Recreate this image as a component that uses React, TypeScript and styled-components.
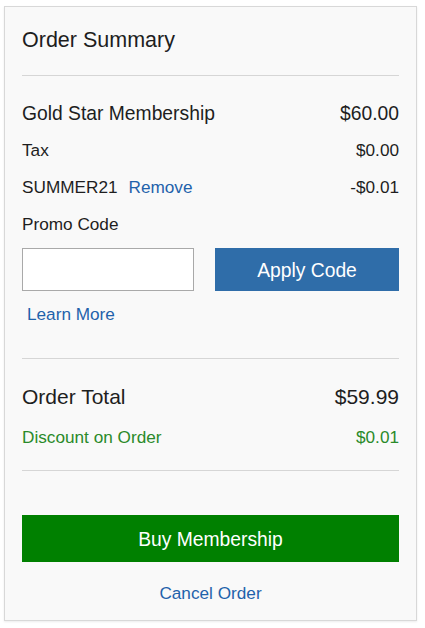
import React from "react";
import styled, { createGlobalStyle } from "styled-components";

const Global = createGlobalStyle`
  html, body { margin: 0; padding: 0; background: #ffffff; }
  body { font-family: "Liberation Sans", Arial, Helvetica, sans-serif; color: #1e1e1e; }
  * { box-sizing: border-box; }
`;

const Card = styled.section`
  margin: 6px 8px 6px 4px;
  border: 1px solid #d8d8d8;
  background: #f9f9f9;
  box-shadow: 0 1px 2px rgba(0, 0, 0, 0.08);
  padding: 20px 17px 9px 17px;
  display: flex;
  flex-direction: column;
`;

const Title = styled.h2`
  margin: 0;
  font-size: 21.5px;
  font-weight: 400;
  line-height: 24px;
  padding-top: 1px;
  height: 24px;
  color: #1e1e1e;
`;

const Divider = styled.hr<{ $top: number }>`
  margin: ${(p) => p.$top}px 0 0 0;
  border: 0;
  border-top: 1px solid #d6d6d6;
  height: 0;
`;

const Row = styled.div<{ $h: number; $top?: number; $size: number; $color?: string }>`
  display: flex;
  align-items: center;
  justify-content: space-between;
  height: ${(p) => p.$h}px;
  padding-top: 2px;
  margin-top: ${(p) => p.$top ?? 0}px;
  font-size: ${(p) => p.$size}px;
  color: ${(p) => p.$color ?? "#1e1e1e"};
`;

const Label = styled.span`
  display: flex;
  align-items: center;
  gap: 11px;
`;

const Link = styled.a<{ $indent?: number }>`
  color: #1f62ab;
  text-decoration: none;
  cursor: pointer;
  margin-left: ${(p) => p.$indent ?? 0}px;
`;

const PromoRow = styled.div`
  display: grid;
  grid-template-columns: 172px 1fr;
  column-gap: 21px;
  height: 43px;
  margin-top: 7px;
`;

const Input = styled.input`
  height: 43px;
  border: 1px solid #a9a9a9;
  background: #fff;
  font-size: 17px;
  padding: 0 8px;
  outline: none;
  font-family: inherit;
`;

const Button = styled.button<{ $bg: string; $h: number; $top?: number }>`
  height: ${(p) => p.$h}px;
  margin-top: ${(p) => p.$top ?? 0}px;
  border: 0;
  padding: 2px 0 0 0;
  background: ${(p) => p.$bg};
  color: #fff;
  font-family: inherit;
  font-size: 19.3px;
  cursor: pointer;
  width: 100%;
`;

const CenterRow = styled.div`
  display: flex;
  justify-content: center;
  align-items: center;
  height: 38px;
  padding-top: 2px;
  margin-top: 11px;
  font-size: 17.2px;
`;

export default function App() {
  return (
    <>
      <Global />
      <Card>
        <Title>Order Summary</Title>
        <Divider $top={24} />
        <Row $h={37} $top={18} $size={19.3}>
          <span>Gold Star Membership</span>
          <span>$60.00</span>
        </Row>
        <Row $h={37} $size={17.2}>
          <span>Tax</span>
          <span>$0.00</span>
        </Row>
        <Row $h={37} $size={17.2}>
          <Label>
            SUMMER21 <Link>Remove</Link>
          </Label>
          <span>-$0.01</span>
        </Row>
        <Row $h={36} $size={17.2}>
          <span>Promo Code</span>
        </Row>
        <PromoRow>
          <Input aria-label="Promo Code" />
          <Button $bg="#2f6da9" $h={43}>Apply Code</Button>
        </PromoRow>
        <Row $h={44} $size={17.2}>
          <Link $indent={5}>Learn More</Link>
        </Row>
        <Divider $top={23} />
        <Row $h={38} $top={18} $size={21}>
          <span>Order Total</span>
          <span>$59.99</span>
        </Row>
        <Row $h={42} $size={17.2} $color="#2a8a2a">
          <span>Discount on Order</span>
          <span>$0.01</span>
        </Row>
        <Divider $top={13} />
        <Button $bg="#008000" $h={47} $top={44}>Buy Membership</Button>
        <CenterRow>
          <Link>Cancel Order</Link>
        </CenterRow>
      </Card>
    </>
  );
}
